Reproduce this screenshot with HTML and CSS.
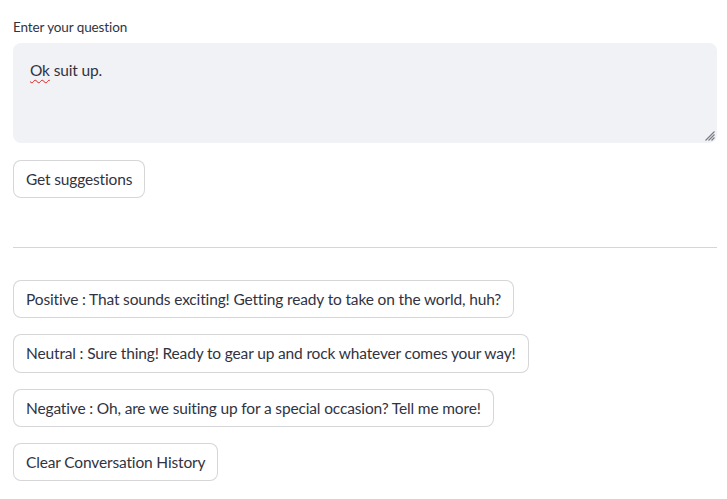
FILE: index.html
```html
<!DOCTYPE html>
<html>
<head>
<meta charset="utf-8">
<link rel="stylesheet" href="styles.css">
</head>
<body>
<main class="app">
  <label class="field-label">Enter your question</label>
  <div class="textarea">
    <span class="misspelled">Ok</span> suit up.
    <svg class="grip" width="11" height="11" viewBox="0 0 11 11">
      <path d="M10.5 1.5 L1.5 10.5 M10.5 4.5 L4.5 10.5 M10.5 7.5 L7.5 10.5" stroke="#7a7c85" stroke-width="1.2" fill="none"/>
    </svg>
  </div>
  <button class="btn btn-get">Get suggestions</button>
  <hr class="divider">
  <div class="suggestions">
    <button class="btn">Positive : That sounds exciting! Getting ready to take on the world, huh?</button>
    <button class="btn">Neutral : Sure thing! Ready to gear up and rock whatever comes your way!</button>
    <button class="btn">Negative : Oh, are we suiting up for a special occasion? Tell me more!</button>
    <button class="btn">Clear Conversation History</button>
  </div>
</main>
</body>
</html>
```

FILE: styles.css
```css
* { box-sizing: border-box; }
html, body { margin: 0; background: #ffffff; }
body {
  font-family: "Lato", "Source Sans Pro", "Noto Sans", sans-serif;
  color: #31333f;
}
.app {
  display: flex;
  flex-direction: column;
  align-items: flex-start;
  padding: 16px 10px 0 13px;
}
.field-label {
  font-size: 13.5px;
  letter-spacing: -0.1px;
  line-height: 22px;
  height: 22px;
  margin-bottom: 5px;
}
.textarea {
  position: relative;
  align-self: stretch;
  height: 100px;
  background: #f0f2f6;
  border-radius: 8px;
  padding: 15px 17px;
  font-size: 15.5px;
  letter-spacing: -0.15px;
  line-height: 24px;
}
.misspelled {
  text-decoration: underline wavy #e02020;
  text-decoration-thickness: 1px;
  text-underline-offset: 3px;
}
.grip {
  position: absolute;
  right: 2px;
  bottom: 2px;
}
.btn {
  font-family: inherit;
  font-size: 15.5px;
  letter-spacing: -0.15px;
  line-height: 24px;
  color: #31333f;
  background: #ffffff;
  border: 1px solid rgba(49, 51, 63, 0.2);
  border-radius: 8px;
  padding: 6px 12px;
  height: 38.4px;
  text-align: left;
  white-space: nowrap;
}
.btn-get { margin-top: 17px; }
.divider {
  align-self: stretch;
  border: none;
  border-top: 1px solid rgba(49, 51, 63, 0.2);
  margin: 48.5px 0 32px;
}
.suggestions {
  display: flex;
  flex-direction: column;
  align-items: flex-start;
  gap: 16px;
}
```
